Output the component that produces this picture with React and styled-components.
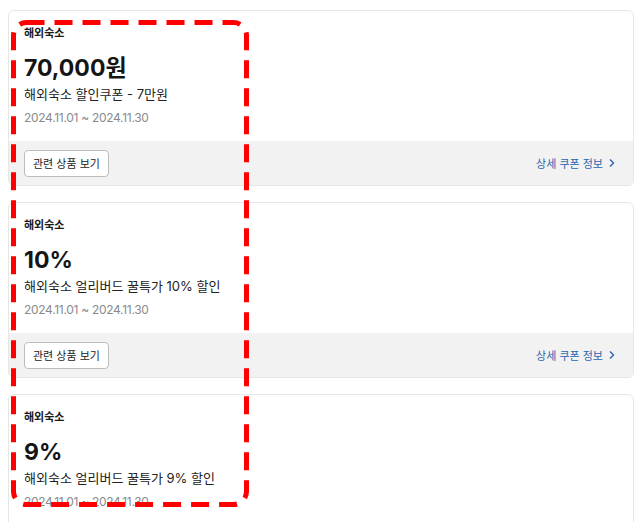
import React from 'react';
import styled, { createGlobalStyle } from 'styled-components';

const coupons = [
  { category: '해외숙소', amount: '70,000원', title: '해외숙소 할인쿠폰 - 7만원', period: '2024.11.01 ~ 2024.11.30' },
  { category: '해외숙소', amount: '10%', title: '해외숙소 얼리버드 꿀특가 10% 할인', period: '2024.11.01 ~ 2024.11.30' },
  { category: '해외숙소', amount: '9%', title: '해외숙소 얼리버드 꿀특가 9% 할인', period: '2024.11.01 ~ 2024.11.30' },
];

export default function App() {
  return (
    <>
      <GlobalStyle />
      <Page>
        <List>
          {coupons.map((c, i) => (
            <Card key={i}>
              <Body>
                <Category>{c.category}</Category>
                <Amount>{c.amount}</Amount>
                <Title>{c.title}</Title>
                <Period>{c.period}</Period>
              </Body>
              <Footer>
                <RelatedButton>관련 상품 보기</RelatedButton>
                <DetailLink>
                  상세 쿠폰 정보
                  <svg width="8" height="10" viewBox="0 0 8 10">
                    <path d="M2 1.5 L5.5 5 L2 8.5" fill="none" stroke="currentColor" strokeWidth="1.4" />
                  </svg>
                </DetailLink>
              </Footer>
            </Card>
          ))}
        </List>
        <Highlight width="240" height="492" viewBox="0 0 240 492">
          <rect x="2.5" y="2.5" width="233" height="482" rx="13" fill="none" stroke="#ff0000" strokeWidth="5" strokeDasharray="18 10" />
        </Highlight>
      </Page>
    </>
  );
}

const GlobalStyle = createGlobalStyle`
  body {
    margin: 0;
    background: #fff;
    font-family: Inter, "Noto Sans CJK KR", sans-serif;
    color: #111;
  }
`;

const Page = styled.div`
  position: relative;
  padding: 10px 4px 0 8px;
  box-sizing: border-box;
`;

const List = styled.div`
  display: flex;
  flex-direction: column;
  gap: 16px;
`;

const Card = styled.div`
  border: 1px solid #e6e6e6;
  border-radius: 6px;
  overflow: hidden;
  background: #fff;
`;

const Body = styled.div`
  display: flex;
  flex-direction: column;
  padding: 14px 15px 14px;
`;

const Category = styled.div`
  font-size: 11px;
  font-weight: 700;
  line-height: 16px;
  color: #1a1a1a;
`;

const Amount = styled.div`
  margin-top: 10px;
  font-size: 23px;
  font-weight: 700;
  line-height: 34px;
  color: #151515;
`;

const Title = styled.div`
  font-size: 13px;
  line-height: 19px;
  color: #222;
`;

const Period = styled.div`
  margin-top: 5px;
  font-size: 12px;
  letter-spacing: -0.3px;
  line-height: 18px;
  color: #8a8a8a;
`;

const Footer = styled.div`
  display: flex;
  align-items: center;
  justify-content: space-between;
  height: 44px;
  padding: 0 15px 0 15px;
  background: #f2f2f2;
`;

const RelatedButton = styled.button`
  height: 27px;
  padding: 0 8px;
  background: #fff;
  border: 1px solid #bdbdbd;
  border-radius: 4px;
  font-family: inherit;
  font-size: 11px;
  color: #222;
`;

const DetailLink = styled.a`
  display: flex;
  align-items: center;
  gap: 5px;
  font-size: 11px;
  color: #2a64b0;
  margin-right: 2px;
`;

const Highlight = styled.svg`
  position: absolute;
  left: 11px;
  top: 20px;
  pointer-events: none;
`;
